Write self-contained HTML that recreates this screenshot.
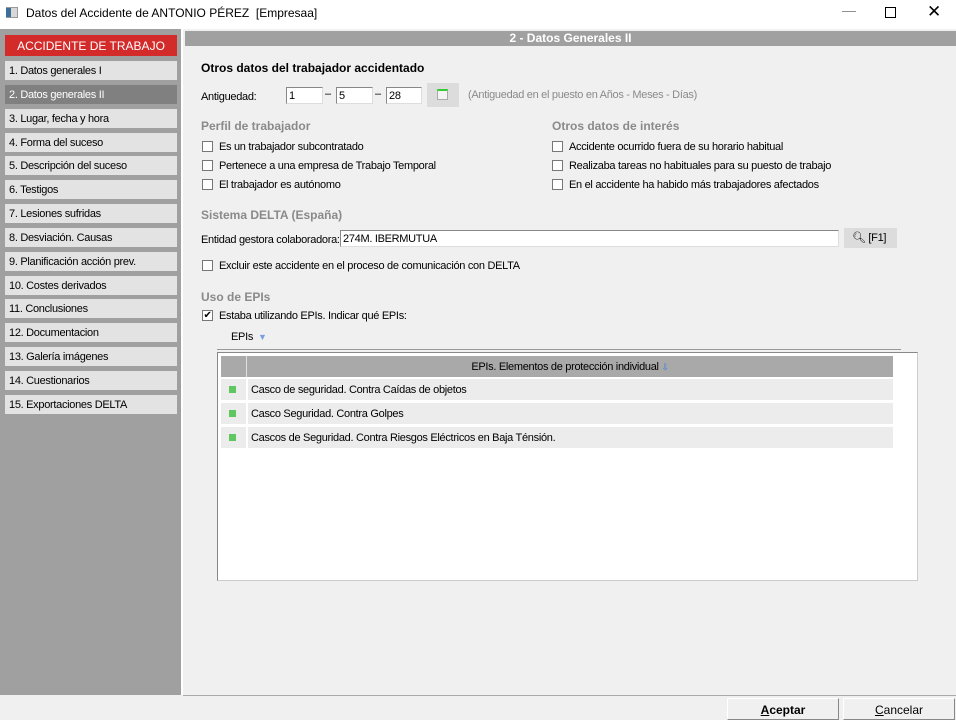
<!DOCTYPE html><html><head><meta charset="utf-8"><style>
*{margin:0;padding:0;box-sizing:border-box}
body{width:956px;height:720px;background:#f0f0f0;font-family:"Liberation Sans",sans-serif;font-size:11px;color:#000;position:relative;overflow:hidden;letter-spacing:-0.3px}
.a{position:absolute;white-space:nowrap}
.side{position:absolute;left:0;top:29px;width:181px;height:666px;background:#a0a0a0}
.it{position:absolute;left:5px;width:172px;height:19px;background:#e3e3e3;padding:4px 0 0 4px;font-size:11px}
.cb{position:absolute;width:11px;height:11px;border:1px solid #777;background:#fff}
.g{color:#8a8a8a;font-weight:bold;font-size:12px;letter-spacing:0}
.inp{position:absolute;height:17px;background:#fff;border:1px solid #888;border-right-color:#ddd;border-bottom-color:#ddd;padding:2px 2px}
.row{position:absolute;left:221px;width:672px;height:21px;background:#ececec}
.row .m{position:absolute;left:8px;top:7px;width:7px;height:7px;background:#5fc75f}
.row span{position:absolute;left:30px;top:5px}
</style></head><body>
<div class="a" style="left:0;top:0;width:956px;height:29px;background:#fff"></div>
<div class="a" style="left:6px;top:7px;width:12px;height:11px;background:#d8d8d8;border:1px solid #999"></div>
<div class="a" style="left:6px;top:8px;width:5px;height:9px;background:#3c6e9a"></div>
<div class="a" style="left:26px;top:6px;font-size:12px;letter-spacing:0">Datos del Accidente de ANTONIO PÉREZ&nbsp; [Empresaa]</div>
<div class="a" style="left:842px;top:2px;font-size:14px;color:#888">—</div>
<div class="a" style="left:885px;top:7px;width:11px;height:11px;border:1px solid #000"></div>
<div class="a" style="left:927px;top:2px;font-size:17px">✕</div>
<div class="side"></div>
<div class="a" style="left:181px;top:29px;width:2px;height:666px;background:#fff"></div>
<div class="a" style="left:5px;top:35px;width:172px;height:21px;background:#d32a2a;color:#fff;text-align:center;padding-top:4px;font-size:12px;letter-spacing:0">ACCIDENTE DE TRABAJO</div>
<div class="it" style="top:61px">1. Datos generales I</div>
<div class="it" style="top:85px;background:#808080;color:#fff">2. Datos generales II</div>
<div class="it" style="top:109px">3. Lugar, fecha y hora</div>
<div class="it" style="top:133px">4. Forma del suceso</div>
<div class="it" style="top:156px">5. Descripción del suceso</div>
<div class="it" style="top:180px">6. Testigos</div>
<div class="it" style="top:204px">7. Lesiones sufridas</div>
<div class="it" style="top:228px">8. Desviación. Causas</div>
<div class="it" style="top:252px">9. Planificación acción prev.</div>
<div class="it" style="top:276px">10. Costes derivados</div>
<div class="it" style="top:299px">11. Conclusiones</div>
<div class="it" style="top:323px">12. Documentacion</div>
<div class="it" style="top:347px">13. Galería imágenes</div>
<div class="it" style="top:371px">14. Cuestionarios</div>
<div class="it" style="top:395px">15. Exportaciones DELTA</div>
<div class="a" style="left:185px;top:31px;width:771px;height:15px;background:#a0a0a0;color:#fff;font-weight:bold;text-align:center;font-size:12px;line-height:15px;letter-spacing:0">2 - Datos Generales II</div>
<div class="a" style="left:201px;top:61px;font-weight:bold;font-size:12px;letter-spacing:0">Otros datos del trabajador accidentado</div>
<div class="a" style="left:201px;top:91px">Antiguedad:</div>
<div class="inp" style="left:286px;top:87px;width:37px">1</div>
<div class="a" style="left:325px;top:88px">–</div>
<div class="inp" style="left:336px;top:87px;width:37px">5</div>
<div class="a" style="left:375px;top:88px">–</div>
<div class="inp" style="left:386px;top:87px;width:36px">28</div>
<div class="a" style="left:427px;top:83px;width:32px;height:24px;background:#dcdcdc"></div>
<div class="a" style="left:437px;top:89px;width:11px;height:11px;border:1px solid #aaa;border-top:2px solid #3c3;background:#f4f4f4"></div>
<div class="a" style="left:468px;top:89px;color:#8a8a8a">(Antiguedad en el puesto en Años - Meses - Días)</div>
<div class="a g" style="left:201px;top:119px">Perfil de trabajador</div>
<div class="a g" style="left:552px;top:119px">Otros datos de interés</div>
<div class="cb" style="left:202px;top:141px"></div><div class="a" style="left:219px;top:141px">Es un trabajador subcontratado</div>
<div class="cb" style="left:202px;top:160px"></div><div class="a" style="left:219px;top:160px">Pertenece a una empresa de Trabajo Temporal</div>
<div class="cb" style="left:202px;top:179px"></div><div class="a" style="left:219px;top:179px">El trabajador es autónomo</div>
<div class="cb" style="left:552px;top:141px"></div><div class="a" style="left:569px;top:141px">Accidente ocurrido fuera de su horario habitual</div>
<div class="cb" style="left:552px;top:160px"></div><div class="a" style="left:569px;top:160px">Realizaba tareas no habituales para su puesto de trabajo</div>
<div class="cb" style="left:552px;top:179px"></div><div class="a" style="left:569px;top:179px">En el accidente ha habido más trabajadores afectados</div>
<div class="a g" style="left:201px;top:208px">Sistema DELTA (España)</div>
<div class="a" style="left:201px;top:234px">Entidad gestora colaboradora:</div>
<div class="inp" style="left:340px;top:230px;width:499px">274M. IBERMUTUA</div>
<div class="a" style="left:844px;top:228px;width:53px;height:20px;background:#dcdcdc;padding:3px 0 0 8px">🔍︎ [F1]</div>
<div class="cb" style="left:202px;top:260px"></div><div class="a" style="left:219px;top:260px">Excluir este accidente en el proceso de comunicación con DELTA</div>
<div class="a g" style="left:201px;top:290px">Uso de EPIs</div>
<div class="cb" style="left:202px;top:310px;font-size:10px;line-height:9px;text-align:center">✔</div><div class="a" style="left:219px;top:310px">Estaba utilizando EPIs. Indicar qué EPIs:</div>
<div class="a" style="left:231px;top:331px">EPIs <span style="color:#7a9fe0;font-size:9px">&nbsp;▼</span></div>
<div class="a" style="left:217px;top:349px;width:684px;height:1px;background:#999"></div>
<div class="a" style="left:217px;top:352px;width:701px;height:229px;background:#fff;border:1px solid #ccc;border-left-color:#888;border-top-color:#888"></div>
<div class="a" style="left:221px;top:356px;width:672px;height:21px;background:#a9a9a9"></div>
<div class="a" style="left:246px;top:356px;width:1px;height:21px;background:#e0e0e0"></div>
<div class="a" style="left:247px;top:361px;width:646px;text-align:center">EPIs. Elementos de protección individual <span style="color:#3a7de0;font-size:9px">⇩</span></div>
<div class="row" style="top:379px"><div class="m"></div><span>Casco de seguridad. Contra Caídas de objetos</span></div>
<div class="row" style="top:403px"><div class="m"></div><span>Casco Seguridad. Contra Golpes</span></div>
<div class="row" style="top:427px"><div class="m"></div><span>Cascos de Seguridad. Contra Riesgos Eléctricos en Baja Ténsión.</span></div>
<div class="a" style="left:246px;top:379px;width:2px;height:69px;background:#fff"></div>
<div class="a" style="left:183px;top:695px;width:773px;height:1px;background:#aaa"></div>
<div class="a" style="left:727px;top:698px;width:112px;height:22px;background:#f0f0f0;border:1px solid #888;border-top-color:#fff;border-left-color:#fff;text-align:center;padding-top:4px;font-weight:bold;font-size:12px;letter-spacing:0"><u>A</u>ceptar</div>
<div class="a" style="left:843px;top:698px;width:112px;height:22px;background:#f0f0f0;border:1px solid #888;border-top-color:#fff;border-left-color:#fff;text-align:center;padding-top:4px;font-size:12px;letter-spacing:0"><u>C</u>ancelar</div>
</body></html>
